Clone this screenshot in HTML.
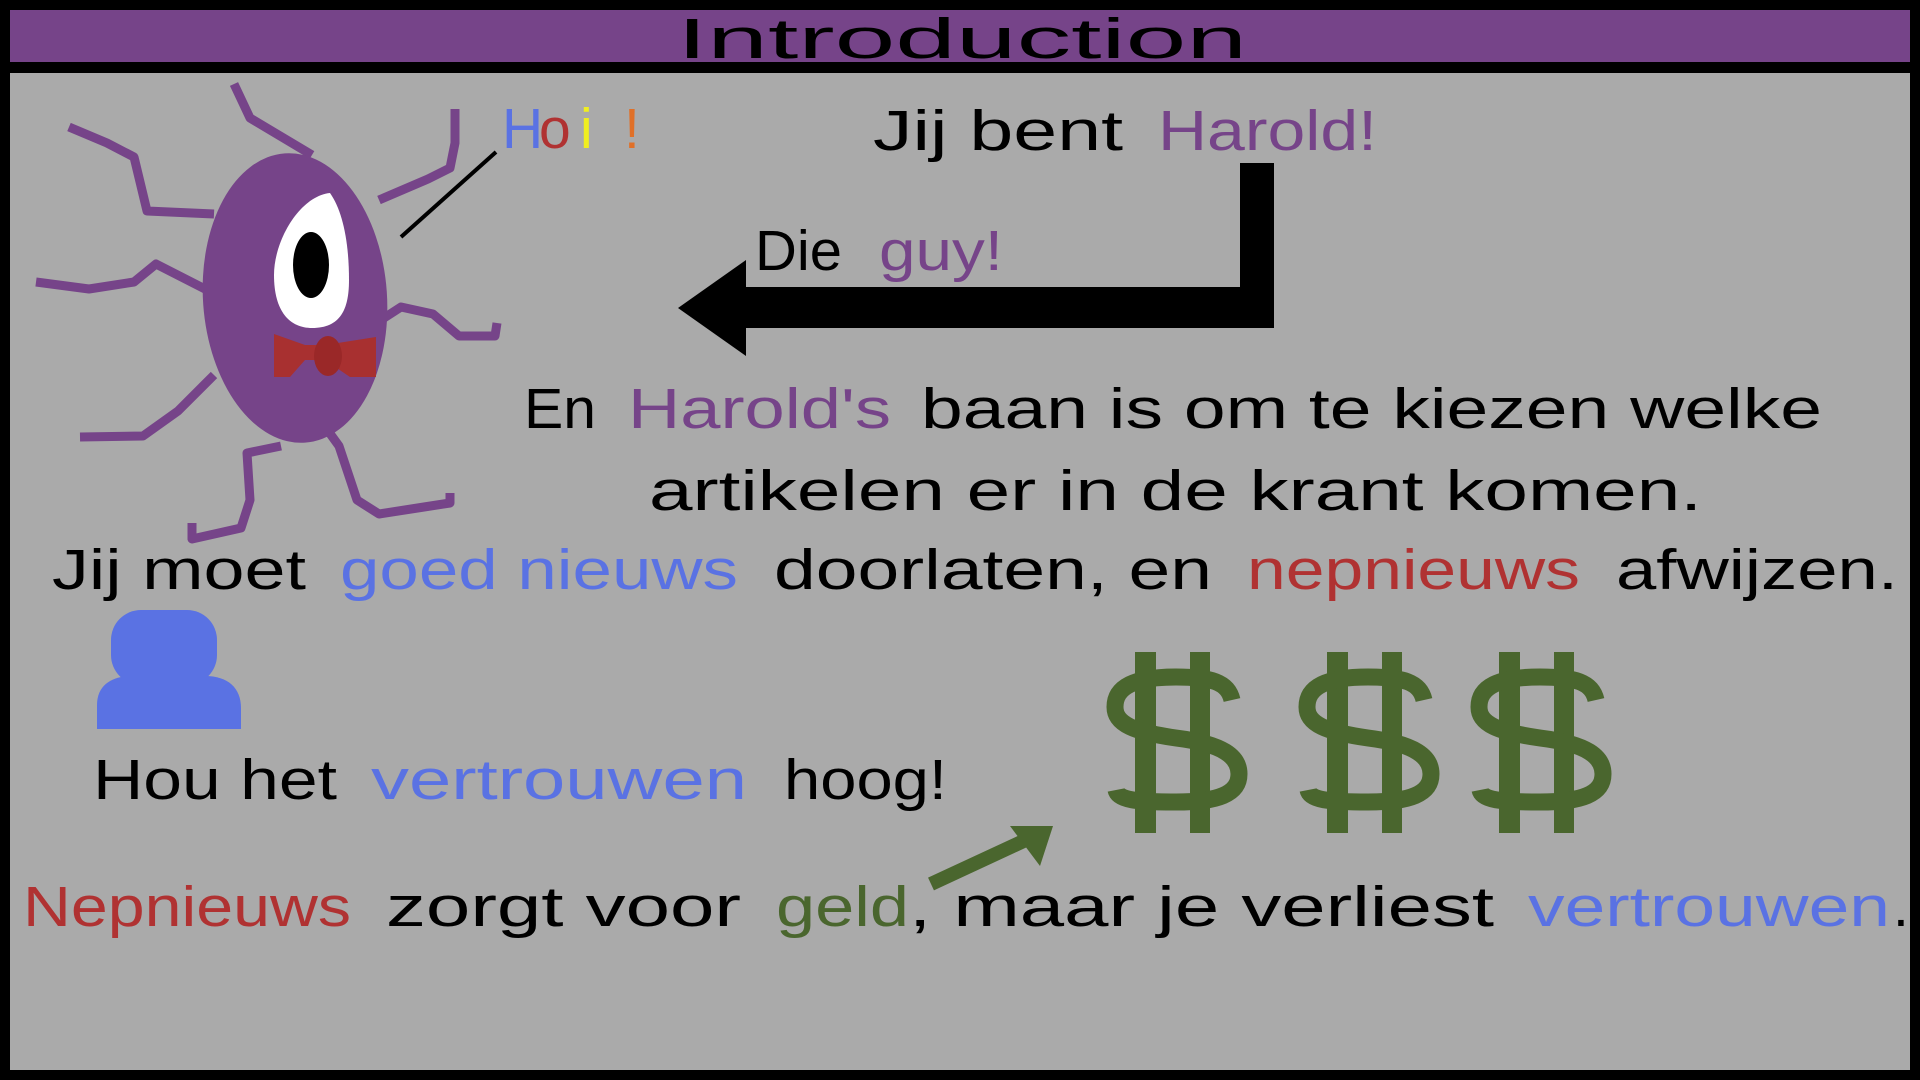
<!DOCTYPE html>
<html><head><meta charset="utf-8"><style>
html,body{margin:0;padding:0;background:#000;width:1920px;height:1080px;overflow:hidden}
svg{display:block}
text{font-family:"Liberation Sans","DejaVu Sans",sans-serif;font-size:57px;}
</style></head><body>
<svg width="1920" height="1080" viewBox="0 0 1920 1080" xmlns="http://www.w3.org/2000/svg">
<rect x="0" y="0" width="1920" height="1080" fill="#000"/>
<rect x="10" y="10" width="1900" height="52" fill="#764489"/>
<rect x="10" y="73" width="1900" height="997" fill="#aaaaaa"/>

<text x="677" y="58" textLength="570" lengthAdjust="spacingAndGlyphs" fill="#000">Introduction</text>

<!-- creature legs -->
<g fill="none" stroke="#764489" stroke-width="9" stroke-linecap="butt" stroke-linejoin="round">
<path d="M312,155 L250,118 L234,84"/>
<path d="M214,214 L147,211 L134,157 L107,143 L69,127"/>
<path d="M205,289 L156,264 L134,282 L89,289 L36,282"/>
<path d="M214,375 L178,411 L143,436 L80,437"/>
<path d="M281,446 L247,453 L250,500 L241,528 L192,539 L192,523"/>
<path d="M326,428 L339,446 L357,500 L379,514 L424,507 L450,503 L450,493"/>
<path d="M384,318 L401,307 L433,314 L459,336 L495,336 L497,323"/>
<path d="M379,200 L428,179 L450,168 L455,143 L455,109"/>
</g>
<ellipse cx="295" cy="298" rx="92" ry="145" fill="#764489" transform="rotate(-4 295 298)"/>
<path d="M330,193 C300,196 274,240 274,275 C274,312 290,328 312,328 C340,328 349,310 349,280 C349,240 342,210 330,193 Z" fill="#fff"/>
<ellipse cx="311" cy="265" rx="18" ry="33" fill="#000"/>
<path d="M274,334 L305,345 L325,345 L376,337 L376,377 L350,377 L325,360 L305,360 L290,377 L274,377 Z" fill="#a83030"/>
<ellipse cx="328" cy="356" rx="14" ry="20" fill="#9a2828"/>
<line x1="401" y1="237" x2="496" y2="152" stroke="#000" stroke-width="4"/>

<text x="502" y="148" fill="#5a72e3">H</text>
<text x="539" y="148" fill="#b03232">o</text>
<text x="580" y="148" fill="#f0ee20">i</text>
<text x="624" y="148" fill="#e07028">!</text>

<text x="873" y="150" textLength="250" lengthAdjust="spacingAndGlyphs" fill="#000">Jij bent</text>
<text x="1158" y="150" textLength="219" lengthAdjust="spacingAndGlyphs" fill="#764489">Harold!</text>

<text x="755" y="270" textLength="87" lengthAdjust="spacingAndGlyphs" fill="#000">Die</text>
<text x="879" y="270" textLength="124" lengthAdjust="spacingAndGlyphs" fill="#764489">guy!</text>

<!-- black arrow -->
<rect x="1240" y="163" width="34" height="165" fill="#000"/>
<rect x="746" y="287" width="528" height="41" fill="#000"/>
<polygon points="678,308 746,260 746,356" fill="#000"/>

<text x="524" y="428" textLength="72" lengthAdjust="spacingAndGlyphs" fill="#000">En</text>
<text x="628" y="428" textLength="263" lengthAdjust="spacingAndGlyphs" fill="#764489">Harold's</text>
<text x="921" y="428" textLength="901" lengthAdjust="spacingAndGlyphs" fill="#000">baan is om te kiezen welke</text>

<text x="649" y="510" textLength="1053" lengthAdjust="spacingAndGlyphs" fill="#000">artikelen er in de krant komen.</text>

<text x="52" y="589" textLength="254" lengthAdjust="spacingAndGlyphs" fill="#000">Jij moet</text>
<text x="340" y="589" textLength="398" lengthAdjust="spacingAndGlyphs" fill="#5a72e3">goed nieuws</text>
<text x="774" y="589" textLength="438" lengthAdjust="spacingAndGlyphs" fill="#000">doorlaten, en</text>
<text x="1247" y="589" textLength="333" lengthAdjust="spacingAndGlyphs" fill="#b03232">nepnieuws</text>
<text x="1616" y="589" textLength="282" lengthAdjust="spacingAndGlyphs" fill="#000">afwijzen.</text>

<!-- person icon -->
<rect x="111" y="610" width="106" height="75" rx="30" fill="#5a72e3"/>
<path d="M97,729 L97,705 C97,685 112,676 132,676 L205,676 C228,676 241,688 241,708 L241,729 Z" fill="#5a72e3"/>

<text x="93" y="799" textLength="244" lengthAdjust="spacingAndGlyphs" fill="#000">Hou het</text>
<text x="371" y="799" textLength="376" lengthAdjust="spacingAndGlyphs" fill="#5a72e3">vertrouwen</text>
<text x="784" y="799" textLength="163" lengthAdjust="spacingAndGlyphs" fill="#000">hoog!</text>

<!-- dollar signs -->
<defs>
<g id="dol">
<rect x="29" y="0" width="21" height="181" fill="#4a662e"/>
<rect x="84" y="0" width="20" height="181" fill="#4a662e"/>
<path d="M126,48 C122,30 105,25 70,25 C28,25 9,35 9,55 C9,72 28,80 70,86 C118,92 133,105 133,122 C133,142 112,150 70,150 C30,150 12,148 10,138" fill="none" stroke="#4a662e" stroke-width="17"/>
</g>
</defs>
<use href="#dol" x="1106" y="652"/>
<use href="#dol" x="1298" y="652"/>
<use href="#dol" x="1470" y="652"/>

<!-- green arrow -->
<line x1="931" y1="884" x2="1030" y2="838" stroke="#4a662e" stroke-width="14"/>
<polygon points="1053,826 1010,826 1040,866" fill="#4a662e"/>

<text x="23" y="926" textLength="328" lengthAdjust="spacingAndGlyphs" fill="#b03232">Nepnieuws</text>
<text x="386" y="926" textLength="355" lengthAdjust="spacingAndGlyphs" fill="#000">zorgt voor</text>
<text x="776" y="926" textLength="133" lengthAdjust="spacingAndGlyphs" fill="#4a662e">geld</text>
<text x="909" y="926" textLength="585" lengthAdjust="spacingAndGlyphs" fill="#000">, maar je verliest</text>
<text x="1528" y="926" textLength="362" lengthAdjust="spacingAndGlyphs" fill="#5a72e3">vertrouwen</text>
<text x="1893" y="926" fill="#000">.</text>
</svg>
</body></html>
